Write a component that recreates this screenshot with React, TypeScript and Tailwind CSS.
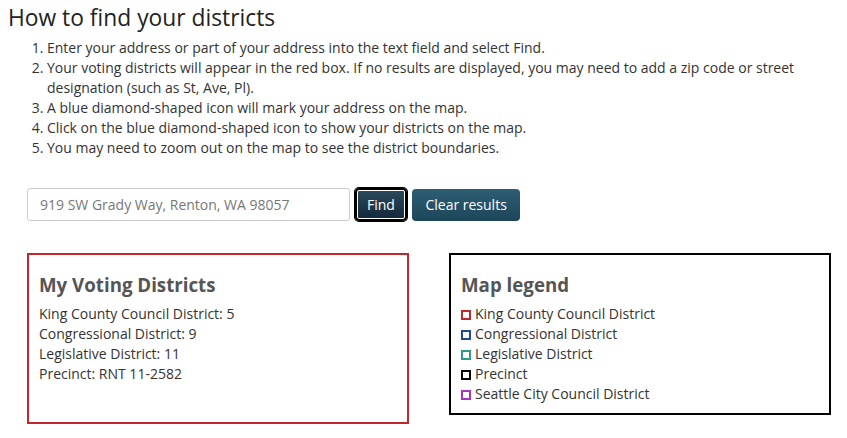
export default function App() {
  const steps = [
    "Enter your address or part of your address into the text field and select Find.",
    "Your voting districts will appear in the red box. If no results are displayed, you may need to add a zip code or street designation (such as St, Ave, Pl).",
    "A blue diamond-shaped icon will mark your address on the map.",
    "Click on the blue diamond-shaped icon to show your districts on the map.",
    "You may need to zoom out on the map to see the district boundaries.",
  ];

  const results = [
    "King County Council District: 5",
    "Congressional District: 9",
    "Legislative District: 11",
    "Precinct: RNT 11-2582",
  ];

  const legend = [
    { label: "King County Council District", color: "border-[#c1272d]" },
    { label: "Congressional District", color: "border-[#1d4f8f]" },
    { label: "Legislative District", color: "border-[#2a9d8a]" },
    { label: "Precinct", color: "border-black" },
    { label: "Seattle City Council District", color: "border-[#a634c8]" },
  ];

  return (
    <div className="w-[847px] h-[438px] bg-white font-[family-name:'Open_Sans',sans-serif] text-[#333] overflow-hidden">
      <h2 className="pl-[8px] pt-[3px] text-[22.8px] leading-[30px] text-[#222]">
        How to find your districts
      </h2>
      <ol className="list-decimal pl-[47px] pr-4 mt-[5px] text-[14px] leading-[20px] text-[#333]">
        {steps.map((s) => (
          <li key={s}>{s}</li>
        ))}
      </ol>

      <div className="flex items-center gap-[5px] pl-[27px] mt-[30px]">
        <input
          className="w-[323px] h-[33px] border border-[#ccc] rounded-[3px] px-3 text-[14px] placeholder:text-[#777] outline-none"
          placeholder="919 SW Grady Way, Renton, WA 98057"
        />
        <button className="h-[33px] px-[10px] rounded-[4px] text-[14px] text-white bg-gradient-to-b from-[#2a4a5c] to-[#13293a] border-2 border-black ring-1 ring-black outline outline-1 -outline-offset-[3px] outline-white">
          Find
        </button>
        <button className="h-[32px] px-[13.5px] rounded-[4px] text-[14px] text-white bg-gradient-to-b from-[#2d5e74] to-[#1d4659]">
          Clear results
        </button>
      </div>

      <div className="flex items-start gap-[40px] pl-[27px] mt-[32px]">
        <div className="w-[382px] h-[171px] border-2 border-[#c1272d] px-[10px] pt-[18px]">
          <h3 className="text-[18.7px] leading-[24px] font-bold text-[#555]">
            My Voting Districts
          </h3>
          <div className="mt-[7px] text-[14px] leading-[20px] text-[#333]">
            {results.map((r) => (
              <div key={r}>{r}</div>
            ))}
          </div>
        </div>

        <div className="w-[382px] h-[162px] border-2 border-black px-[10px] pt-[18px]">
          <h3 className="text-[18.7px] leading-[24px] font-bold text-[#555]">
            Map legend
          </h3>
          <div className="mt-[7px] text-[14px] leading-[20px] text-[#333]">
            {legend.map((l) => (
              <div key={l.label} className="flex items-center gap-[4px]">
                <span className={`inline-block w-[10px] h-[10px] border-2 ${l.color} mt-[2px]`} />
                <span>{l.label}</span>
              </div>
            ))}
          </div>
        </div>
      </div>
    </div>
  );
}
